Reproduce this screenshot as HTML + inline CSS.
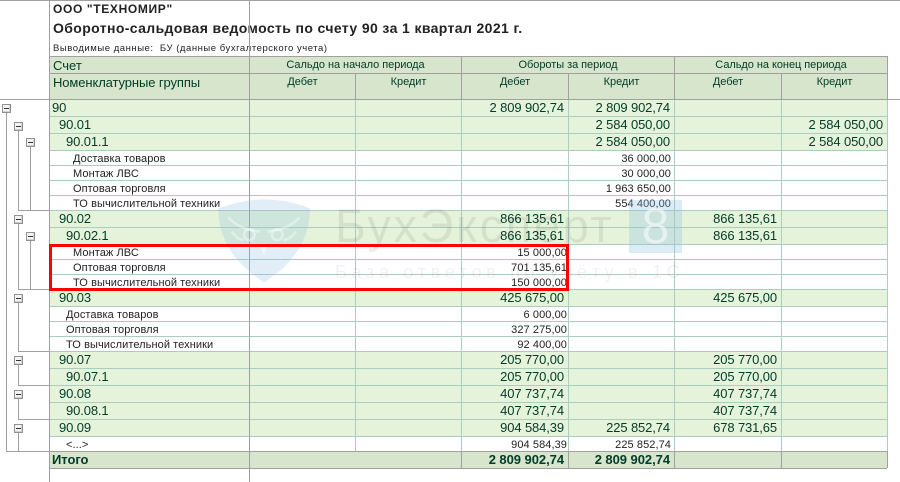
<!DOCTYPE html>
<html><head><meta charset="utf-8"><style>
html,body{margin:0;padding:0;background:#fff}
body{width:900px;height:482px;position:relative;overflow:hidden;font-family:"Liberation Sans",Arial,sans-serif}
.row{position:absolute;left:50px;width:837px;box-sizing:border-box;border-bottom:1px solid #aacdbf}
.g{height:17px;background:#e6f3db;color:#003c28;font-size:13px;line-height:16px;letter-spacing:-.12px}
.w{height:15px;background:#fff;color:#222;font-size:11px;line-height:14px;letter-spacing:.08px}
.h{height:17px;background:#d6e5cb;color:#003c28;font-size:13px;line-height:16px;font-weight:bold;border-bottom:1px solid #a0a0a0;letter-spacing:-.05px}
.row span{position:absolute;top:0;white-space:pre}
.w span{top:1px}
.g .c4,.h .c4{right:323px}.g .c5,.h .c5{right:217px}.c6{right:110px}.c7{right:4px}
.w .c4{right:320px}.w .c5{right:216px}
.l{position:absolute;background:#a0a0a0}
.v{position:absolute;width:1px;top:99px;height:352px;background:#aacdbf}
.b{position:absolute;width:7px;height:7px;border:1px solid #919191;background:#f4f4f4;box-shadow:inset -1px -1px 0 #d0d0d0}
.b:after{content:"";position:absolute;left:1px;top:3px;width:5px;height:1px;background:#333}
.t{position:absolute;white-space:pre}
.hd{position:absolute;color:#003c28;font-size:11px;line-height:13px;text-align:center;white-space:pre;letter-spacing:-.05px}
</style></head><body>

<div class="t" style="left:53px;top:2px;font-size:12px;line-height:15px;font-weight:bold;color:#222;letter-spacing:.65px">ООО "ТЕХНОМИР"</div>
<div class="t" style="left:53px;top:20px;font-size:14px;line-height:17px;font-weight:bold;color:#222;letter-spacing:.38px">Оборотно-сальдовая ведомость по счету 90 за 1 квартал 2021 г.</div>
<div class="t" style="left:53px;top:43px;font-size:9.5px;line-height:12px;color:#222;letter-spacing:.54px">Выводимые данные:  БУ (данные бухгалтерского учета)</div>

<div style="position:absolute;left:50px;top:57px;width:837px;height:42px;background:#d6e5cb"></div>
<div class="t" style="left:53px;top:58px;font-size:13px;line-height:16px;color:#003c28">Счет</div>
<div class="t" style="left:53px;top:75px;font-size:13px;line-height:16px;color:#003c28;letter-spacing:-.1px">Номенклатурные группы</div>
<div class="hd" style="left:250px;width:211px;top:59px">Сальдо на начало периода</div>
<div class="hd" style="left:462px;width:212px;top:59px">Обороты за период</div>
<div class="hd" style="left:675px;width:212px;top:59px">Сальдо на конец периода</div>
<div class="hd" style="left:250px;width:105px;top:76px">Дебет</div>
<div class="hd" style="left:356px;width:105px;top:76px">Кредит</div>
<div class="hd" style="left:462px;width:106px;top:76px">Дебет</div>
<div class="hd" style="left:569px;width:105px;top:76px">Кредит</div>
<div class="hd" style="left:675px;width:106px;top:76px">Дебет</div>
<div class="hd" style="left:782px;width:105px;top:76px">Кредит</div>

<div class="row g" style="top:100px"><span style="left:2px">90</span><span class="c4">2 809 902,74</span><span class="c5">2 809 902,74</span></div>
<div class="row g" style="top:117px"><span style="left:9px">90.01</span><span class="c5">2 584 050,00</span><span class="c7">2 584 050,00</span></div>
<div class="row g" style="top:134px"><span style="left:16px">90.01.1</span><span class="c5">2 584 050,00</span><span class="c7">2 584 050,00</span></div>
<div class="row w" style="top:151px"><span style="left:23px">Доставка товаров</span><span class="c5">36 000,00</span></div>
<div class="row w" style="top:166px"><span style="left:23px">Монтаж ЛВС</span><span class="c5">30 000,00</span></div>
<div class="row w" style="top:181px"><span style="left:23px">Оптовая торговля</span><span class="c5">1 963 650,00</span></div>
<div class="row w" style="top:196px"><span style="left:23px">ТО вычислительной техники</span><span class="c5">554 400,00</span></div>
<div class="row g" style="top:211px"><span style="left:9px">90.02</span><span class="c4">866 135,61</span><span class="c6">866 135,61</span></div>
<div class="row g" style="top:228px"><span style="left:16px">90.02.1</span><span class="c4">866 135,61</span><span class="c6">866 135,61</span></div>
<div class="row w" style="top:245px"><span style="left:23px">Монтаж ЛВС</span><span class="c4">15 000,00</span></div>
<div class="row w" style="top:260px"><span style="left:23px">Оптовая торговля</span><span class="c4">701 135,61</span></div>
<div class="row w" style="top:275px"><span style="left:23px">ТО вычислительной техники</span><span class="c4">150 000,00</span></div>
<div class="row g" style="top:290px"><span style="left:9px">90.03</span><span class="c4">425 675,00</span><span class="c6">425 675,00</span></div>
<div class="row w" style="top:307px"><span style="left:16px">Доставка товаров</span><span class="c4">6 000,00</span></div>
<div class="row w" style="top:322px"><span style="left:16px">Оптовая торговля</span><span class="c4">327 275,00</span></div>
<div class="row w" style="top:337px"><span style="left:16px">ТО вычислительной техники</span><span class="c4">92 400,00</span></div>
<div class="row g" style="top:352px"><span style="left:9px">90.07</span><span class="c4">205 770,00</span><span class="c6">205 770,00</span></div>
<div class="row g" style="top:369px"><span style="left:16px">90.07.1</span><span class="c4">205 770,00</span><span class="c6">205 770,00</span></div>
<div class="row g" style="top:386px"><span style="left:9px">90.08</span><span class="c4">407 737,74</span><span class="c6">407 737,74</span></div>
<div class="row g" style="top:403px"><span style="left:16px">90.08.1</span><span class="c4">407 737,74</span><span class="c6">407 737,74</span></div>
<div class="row g" style="top:420px"><span style="left:9px">90.09</span><span class="c4">904 584,39</span><span class="c5">225 852,74</span><span class="c6">678 731,65</span></div>
<div class="row w" style="top:437px"><span style="left:16px">&lt;...&gt;</span><span class="c4">904 584,39</span><span class="c5">225 852,74</span></div>
<div class="row h" style="top:452px"><span style="left:2px">Итого</span><span class="c4">2 809 902,74</span><span class="c5">2 809 902,74</span></div>

<!-- green verticals -->
<div class="v" style="left:355px"></div><div class="v" style="left:461px"></div><div class="v" style="left:568px"></div>
<div class="v" style="left:674px"></div><div class="v" style="left:781px"></div><div class="v" style="left:887px"></div>

<!-- gray grid -->
<div class="l" style="left:0;top:0;width:900px;height:1px"></div>
<div class="l" style="left:49px;top:0;width:1px;height:482px"></div>
<div class="l" style="left:249px;top:0;width:1px;height:482px"></div>
<div class="l" style="left:49px;top:56px;width:838px;height:1px"></div>
<div class="l" style="left:49px;top:73px;width:838px;height:1px"></div>
<div class="l" style="left:0;top:99px;width:900px;height:1px"></div>
<div class="l" style="left:355px;top:73px;width:1px;height:26px"></div>
<div class="l" style="left:461px;top:56px;width:1px;height:43px"></div>
<div class="l" style="left:568px;top:73px;width:1px;height:26px"></div>
<div class="l" style="left:674px;top:56px;width:1px;height:43px"></div>
<div class="l" style="left:781px;top:73px;width:1px;height:26px"></div>
<div class="l" style="left:887px;top:56px;width:1px;height:43px"></div>
<div class="l" style="left:6px;top:451px;width:881px;height:1px"></div>
<div class="l" style="left:461px;top:451px;width:1px;height:17px"></div>
<div class="l" style="left:568px;top:451px;width:1px;height:17px"></div>
<div class="l" style="left:674px;top:451px;width:1px;height:17px"></div>
<div class="l" style="left:781px;top:451px;width:1px;height:17px"></div>
<div class="l" style="left:887px;top:451px;width:1px;height:17px"></div>

<!-- tree -->
<div class="l" style="left:6px;top:112px;width:1px;height:339px"></div>
<div class="l" style="left:18px;top:130px;width:1px;height:80px"></div>
<div class="l" style="left:30px;top:147px;width:1px;height:63px"></div>
<div class="l" style="left:18px;top:210px;width:31px;height:1px"></div>
<div class="l" style="left:18px;top:224px;width:1px;height:65px"></div>
<div class="l" style="left:30px;top:241px;width:1px;height:48px"></div>
<div class="l" style="left:18px;top:289px;width:31px;height:1px"></div>
<div class="l" style="left:18px;top:303px;width:1px;height:48px"></div>
<div class="l" style="left:18px;top:351px;width:31px;height:1px"></div>
<div class="l" style="left:18px;top:365px;width:1px;height:20px"></div>
<div class="l" style="left:18px;top:385px;width:31px;height:1px"></div>
<div class="l" style="left:18px;top:399px;width:1px;height:20px"></div>
<div class="l" style="left:18px;top:419px;width:31px;height:1px"></div>
<div class="l" style="left:18px;top:433px;width:1px;height:18px"></div>
<div class="b" style="left:2px;top:104px"></div>
<div class="b" style="left:14px;top:122px"></div>
<div class="b" style="left:26px;top:138px"></div>
<div class="b" style="left:14px;top:215px"></div>
<div class="b" style="left:26px;top:232px"></div>
<div class="b" style="left:14px;top:294px"></div>
<div class="b" style="left:14px;top:356px"></div>
<div class="b" style="left:14px;top:390px"></div>
<div class="b" style="left:14px;top:424px"></div>

<!-- watermark -->
<svg style="position:absolute;left:210px;top:190px" width="130" height="100" viewBox="0 0 390 300">
<path d="M25 55 Q100 28 162 28 Q230 28 300 55 Q300 190 162 277 Q25 190 25 55Z" fill="#8cbfe0" fill-opacity=".26"/>
<g fill="none" stroke="#fff" stroke-opacity=".4" stroke-width="8">
<path d="M55 82 Q85 118 150 125"/><path d="M268 82 Q238 118 172 125"/>
<circle cx="118" cy="134" r="16"/><circle cx="202" cy="134" r="16"/>
<path d="M65 125 Q85 150 100 150"/><path d="M258 125 Q238 150 220 150"/>
</g>
<path d="M150 168H172L161 194Z" fill="#fff" fill-opacity=".6"/>
</svg>
<div class="t" style="left:335px;top:199px;font-size:47px;line-height:54px;color:#000;opacity:.07;letter-spacing:2.6px">БухЭксперт</div>
<div class="t" style="left:335px;top:261px;font-size:18px;line-height:22px;color:#000;opacity:.05;letter-spacing:4.7px">База ответов по учёту в 1С</div>
<div style="position:absolute;left:629px;top:200px;width:53px;height:53px;background:#8cbfe0;opacity:.3"></div>
<div class="t" style="left:629px;top:200px;width:53px;height:53px;text-align:center;font-size:50px;line-height:53px;color:#fff;opacity:.55">8</div>

<!-- red frame -->
<div style="position:absolute;left:49px;top:244px;width:520px;height:47px;box-sizing:border-box;border:3px solid #ff0000"></div>
</body></html>
